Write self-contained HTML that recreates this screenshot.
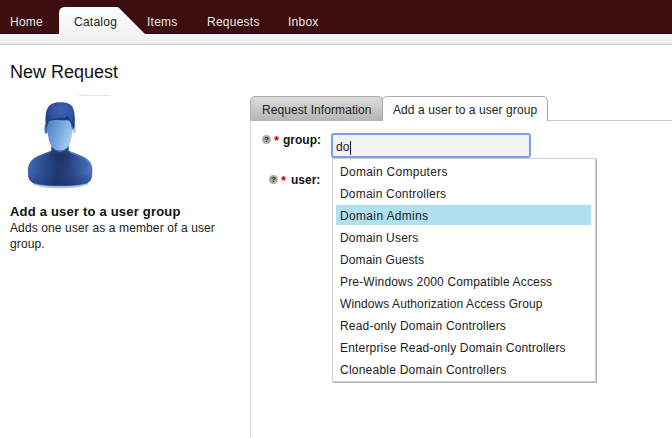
<!DOCTYPE html>
<html><head><meta charset="utf-8">
<style>
*{margin:0;padding:0;box-sizing:border-box}
html,body{width:672px;height:438px;overflow:hidden;background:#fff}
body{font-family:"Liberation Sans",sans-serif;color:#222;position:relative}
.a{position:absolute;white-space:nowrap;line-height:14px}
#nav{position:absolute;left:0;top:0;width:672px;height:34px;background:#3d0d10}
#nav .shade{position:absolute;left:0;top:33px;width:672px;height:1px;background:#2c0406}
#strip{position:absolute;left:0;top:34px;width:672px;height:11px;background:linear-gradient(#fff 0,#fff 1px,#f2f2f2 1px,#f2f2f2 8px,#ececec 9px,#e2e2e2 10px,#d0d0d0 10px,#d0d0d0 11px)}
.nl{font-size:12px;color:#ece6e6;top:15px;letter-spacing:0.25px}
#cat{position:absolute;left:59px;top:7px;width:86px;height:28px}
#title{font-size:18px;color:#111;left:10px;top:62px;line-height:20px}
#panelL{position:absolute;left:250px;top:120px;width:1px;height:318px;background:#dcdcdc}
#panelT{position:absolute;left:547px;top:120px;width:125px;height:1px;background:#c8c8c8}
.tab{position:absolute;top:96px;height:25px;border:1px solid #ababab;border-bottom:none;border-radius:5px 5px 0 0;font-size:12px;color:#222}
#tab1{left:250px;width:133px;background:linear-gradient(#dcdcdc,#b4b4b4)}
#tab2{left:382px;width:166px;background:#fff;height:25px}
.help{position:absolute;width:9px;height:9px;border-radius:50%;background:#aaaaaa;color:#111;font-size:8px;font-weight:bold;line-height:9px;text-align:center}
.req{position:absolute;color:#cc0000;font-weight:bold;font-size:13px;line-height:14px}
.lbl{font-size:12px;font-weight:bold;color:#111}
#inp{position:absolute;left:331px;top:133px;width:200px;height:25px;background:#f2f2f2;border:2px solid #74a2f2;border-radius:3px}
#dd{position:absolute;left:332px;top:158px;width:264px;height:224px;background:#fff;border:1px solid #cfcfcf;box-shadow:1px 1px 0 #b3b3b3}
.it{position:absolute;left:3px;width:255px;height:20px;font-size:12px;color:#222;padding-left:4px;padding-top:1px;line-height:20px}
.it.hl{background:#afe0f0}
</style></head><body>
<div id="nav"><div class="shade"></div></div>
<div id="strip"></div>
<svg id="cat" width="86" height="28" viewBox="0 0 86 28"><defs><linearGradient id="cg" x1="0" y1="0" x2="0" y2="1"><stop offset="0" stop-color="#ffffff"/><stop offset="1" stop-color="#f3f3f3"/></linearGradient></defs><path d="M0 28 L0 6 Q0 0 6 0 L58 0 Q59 0 60 1 L86 27 L86 28 Z" fill="url(#cg)"/></svg>
<div class="a nl" style="left:10px">Home</div>
<div class="a nl" style="left:74px;color:#222">Catalog</div>
<div class="a nl" style="left:147px">Items</div>
<div class="a nl" style="left:207px">Requests</div>
<div class="a nl" style="left:288px">Inbox</div>

<div class="a" id="title">New Request</div>
<div style="position:absolute;left:79px;top:95px;width:11px;height:1px;background:#e4e4e4"></div><div style="position:absolute;left:91px;top:95px;width:10px;height:1px;background:#e4e4e4"></div><div style="position:absolute;left:102px;top:95px;width:8px;height:1px;background:#e4e4e4"></div>
<svg style="position:absolute;left:20px;top:92px" width="80" height="100" viewBox="20 92 80 100">
<defs>
<linearGradient id="bodyg" x1="0" y1="0" x2="1" y2="0"><stop offset="0" stop-color="#3e66b4"/><stop offset="0.15" stop-color="#32559e"/><stop offset="0.45" stop-color="#22386e"/><stop offset="0.6" stop-color="#253d78"/><stop offset="0.85" stop-color="#3a5ea8"/><stop offset="1" stop-color="#4a76c4"/></linearGradient>
<linearGradient id="faceg" x1="0" y1="0.25" x2="1" y2="0.75"><stop offset="0" stop-color="#4f7ec6"/><stop offset="0.5" stop-color="#78a8e0"/><stop offset="1" stop-color="#b0d6f4"/></linearGradient>
<radialGradient id="hairg" cx="62" cy="110" r="16" gradientUnits="userSpaceOnUse"><stop offset="0" stop-color="#3d62b0"/><stop offset="0.7" stop-color="#30539e"/><stop offset="1" stop-color="#243f86"/></radialGradient>
<radialGradient id="neckg" cx="60" cy="150" r="14" gradientUnits="userSpaceOnUse"><stop offset="0" stop-color="#162c66" stop-opacity="0.85"/><stop offset="1" stop-color="#162c66" stop-opacity="0"/></radialGradient>
<linearGradient id="botg" x1="0" y1="0" x2="0" y2="1"><stop offset="0" stop-color="#1a3270" stop-opacity="0"/><stop offset="1" stop-color="#1a3270" stop-opacity="0.45"/></linearGradient>
<filter id="bl" x="-10%" y="-10%" width="120%" height="120%"><feGaussianBlur stdDeviation="0.3"/></filter>
</defs>
<g filter="url(#bl)">
<path d="M33 182 C42 185.5 52 186.3 60.5 186.3 C69 186.3 79 185.5 88 182 L88 184.5 C79 187.8 69 188.3 60.5 188.3 C52 188.3 42 187.8 33 184.5 Z" fill="#86b6ea" opacity="0.75"/>
<path d="M51.7 140 L51.7 151 C47 153 38 155.5 33 159.4 C30 162 28.9 165 28.5 168 C28.2 172 28.3 175 28.8 177.5 C29.5 180.5 31.5 182 34 183 C42 185.3 52 185.8 60.5 185.8 C69 185.8 79 185.3 87 183 C89.5 182 91 180 91.4 177 C91.8 173.5 92 170 91.7 167.5 C91.3 164 89.5 161 86 158.5 C81 155.5 74 153.5 68.3 151 L68.3 140 Z" fill="url(#bodyg)" stroke="#1b3574" stroke-width="0.6"/>
<path d="M40 154 L80 154 L80 176 L40 176 Z" fill="url(#neckg)"/>
<path d="M70 152.2 C75 154.5 81 156 85.5 159 C89 161.5 90.6 164 91 168" fill="none" stroke="#5a8ad4" stroke-width="1.1" opacity="0.75"/>
<path d="M50 152.2 C45 154.5 39 156 34.5 159 C31 161.5 29.6 164 29.2 168" fill="none" stroke="#4470be" stroke-width="0.9" opacity="0.5"/>
<path d="M29 172 C45 178 75 178 91.5 172 L91 180 C85 185 70 186 60.5 186 C50 186 35 185 29.5 180 Z" fill="url(#botg)"/>
<ellipse cx="46.2" cy="129" rx="1.8" ry="4.8" fill="#4570ba"/>
<ellipse cx="74.2" cy="129" rx="1.7" ry="4.4" fill="#a8cdf0"/>
<path d="M47.4 114 C47.2 127 47.6 136 49.5 142 C51.5 147.5 55.5 150.5 60 150.5 C64.5 150.5 68.5 147.5 70.5 142 C72.4 136 72.8 127 72.6 114 Z" fill="url(#faceg)"/>
<path d="M51.5 145.5 C54 149.5 57 151.2 60 151.2 C63 151.2 66 149.5 68.5 145.5" fill="none" stroke="#9cc6f0" stroke-width="0.8" opacity="0.7"/>
<path d="M45.9 127 C44.9 118 45.4 109 50 105 C53.5 102.6 57 102.2 60.5 102.2 C64 102.2 67.5 102.6 71 105 C75 108.5 75.2 118 74.6 127 L72.7 129.5 C72.2 124.5 71 121.5 69.5 120 C66 119.8 62 119.8 58 119.6 C54 119.6 51 119.8 49.6 120.4 C48.3 122 47.6 124.5 47.2 127 Z" fill="url(#hairg)"/>
<path d="M49 120.6 C52 118.8 57 118.4 62.4 117.4 L63.5 118.3 L66.3 116.9 L67.4 115.6 L70 119.8 C71.2 121.5 72.2 124.5 72.7 129.3 L72 129.3 C71.5 125 70.5 122 69 120.6 L66.5 120.2 L63.8 120.3 L58 120 C54 119.9 51 120.2 49.4 121.2 Z" fill="#1d3676" opacity="0.9"/>
</g>
</svg>

<div class="a" style="left:10px;top:205px;font-size:13px;font-weight:bold;color:#111;letter-spacing:0.2px">Add a user to a user group</div>
<div class="a" style="left:10px;top:220px;font-size:12px;color:#222;line-height:16px;letter-spacing:0.12px">Adds one user as a member of a user<br>group.</div>

<div id="panelL"></div>
<div id="panelT"></div>
<div class="tab" id="tab1"><span class="a" style="left:11px;top:6px;letter-spacing:0.08px">Request Information</span></div>
<div class="tab" id="tab2"><span class="a" style="left:10px;top:6px;letter-spacing:0.08px">Add a user to a user group</span></div>

<div class="help" style="left:262px;top:135px">?</div>
<div class="req" style="left:274px;top:134px">*</div>
<div class="a lbl" style="left:283px;top:133px">group:</div>

<div class="help" style="left:269px;top:175px">?</div>
<div class="req" style="left:281px;top:174px">*</div>
<div class="a lbl" style="left:291px;top:173px">user:</div>

<div id="inp"><span class="a" style="left:3px;top:5px;font-size:12px;color:#222">do</span><span style="position:absolute;left:17px;top:6px;width:1px;height:14px;background:#111"></span></div>

<div id="dd">
<div class="it" style="top:2px;letter-spacing:0.27px">Domain Computers</div>
<div class="it" style="top:24px;letter-spacing:0.20px">Domain Controllers</div>
<div class="it hl" style="top:46px;letter-spacing:0.34px">Domain Admins</div>
<div class="it" style="top:68px;letter-spacing:0.20px">Domain Users</div>
<div class="it" style="top:90px;letter-spacing:0.11px">Domain Guests</div>
<div class="it" style="top:112px;letter-spacing:0.16px">Pre-Windows 2000 Compatible Access</div>
<div class="it" style="top:134px;letter-spacing:0.09px">Windows Authorization Access Group</div>
<div class="it" style="top:156px;letter-spacing:0.19px">Read-only Domain Controllers</div>
<div class="it" style="top:178px;letter-spacing:0.18px">Enterprise Read-only Domain Controllers</div>
<div class="it" style="top:200px;letter-spacing:0.23px">Cloneable Domain Controllers</div>
</div>
</body></html>
